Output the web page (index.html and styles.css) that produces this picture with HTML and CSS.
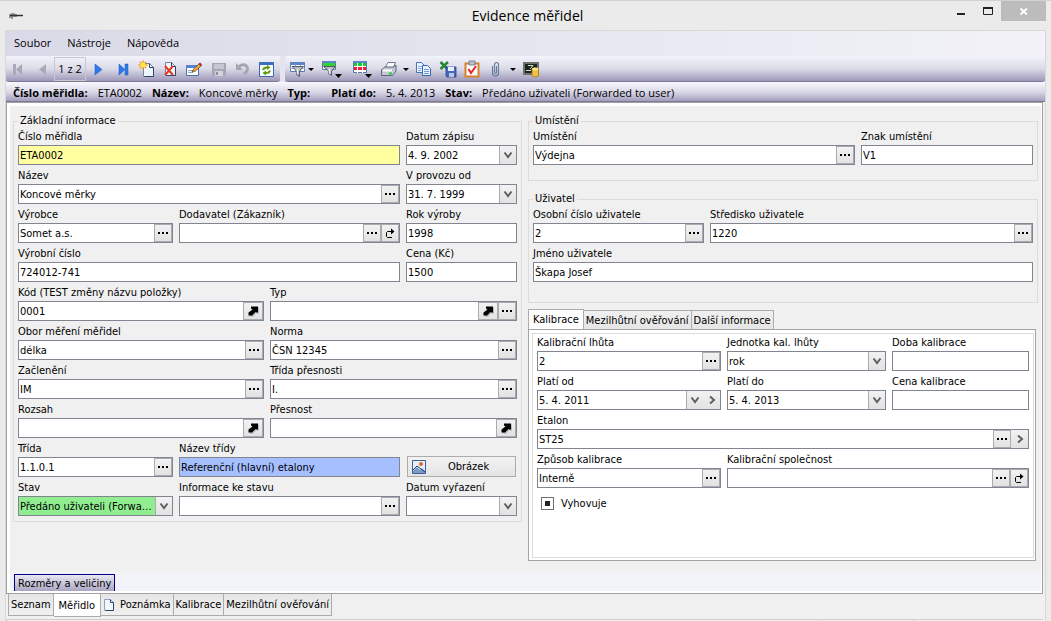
FILE: index.html
```html
<!DOCTYPE html>
<html lang="cs">
<head>
<meta charset="utf-8">
<title>Evidence měřidel</title>
<link rel="stylesheet" href="styles.css">
</head>
<body>
<svg class="sprite" aria-hidden="true">
  <symbol id="dots" viewBox="0 0 12 12"><path d="M1 5h2v2H1zM5 5h2v2H5zM9 5h2v2H9z" fill="#000"/></symbol>
  <symbol id="down" viewBox="0 0 12 12"><path d="M2.500 3.500 6 8l3.500-4.500" fill="none" stroke="#606060" stroke-width="2"/></symbol>
  <symbol id="right" viewBox="0 0 12 12"><path d="M4 2.500 8 6 4 9.500" fill="none" stroke="#606060" stroke-width="2"/></symbol>
  <symbol id="jump" viewBox="0 0 12 12"><path d="M8 4.500H3.500L2.500 5.500v4l1 1H8" fill="none" stroke="#000"/><path d="M7 1.500 10.500 4.500 7 7.500z" fill="#000"/></symbol>
  <symbol id="diag" viewBox="0 0 12 12"><path d="M4 1.500h7v6L9.500 8 8.500 7 5 11 1.500 10.500V8L5.500 4.500z" fill="#bbb" transform="translate(1 1)"/><path d="M4 1.500h7v6L9.500 7.500 8.500 7 5 10.500H1.500V7.500L5.500 4.500 4 3.500z" fill="#000"/></symbol>
  <symbol id="page" viewBox="0 0 12 14"><path d="M1.500 1.500h6l3 3v8h-9z" fill="#f2f7fd" stroke="#8ba2c0"/><path d="M7.500 1.500v3h3v8h-8" fill="none" stroke="#2d4468"/></symbol>
</svg>

<div class="window">
  <header class="titlebar">
    <svg class="app-icon" width="16" height="10" viewBox="0 0 16 10"><path d="M1 3v4M3 2v6M5 2v4M7 3v3" stroke="#444" fill="none"/><path d="M1 4.500h13" stroke="#333" stroke-width="1.500"/></svg>
    <h1 class="title">Evidence měřidel</h1>
    <div class="window-buttons">
      <button class="win" aria-label="Minimalizovat"><svg width="26" height="20"><path d="M8 12h8v2H8z" fill="#222"/></svg></button>
      <button class="win" aria-label="Maximalizovat"><svg width="26" height="20"><path d="M8 7h10" stroke="#222" stroke-width="2"/><path d="M8.500 6.500h9v7h-9z" fill="none" stroke="#222"/></svg></button>
      <button class="win close" aria-label="Zavřít"><svg width="45" height="20"><path d="M19.500 7.500 26 13.500M26 7.500l-6.500 6" stroke="#fff" stroke-width="1.800"/></svg></button>
    </div>
  </header>

  <div class="frame">
    <nav class="menubar">
      <button class="menu">Soubor</button><button class="menu">Nástroje</button><button class="menu">Nápověda</button>
    </nav>

    <div class="toolbars">
      <div class="toolbar">
        <button class="tool" aria-label="První"><svg width="24" height="24"><path d="M7 7h3v11H7zM16 7v11l-6-5.500z" fill="#aaa9b8"/></svg></button>
        <button class="tool" aria-label="Předchozí"><svg width="24" height="24"><path d="M16 7v11l-7-5.500z" fill="#aaa9b8"/></svg></button>
        <span class="position">1 z 2</span>
        <button class="tool" aria-label="Další"><svg width="24" height="24"><path d="M9 7v11l7-5.500z" fill="#2f78e8" stroke="#1c55c0" stroke-width=".5"/></svg></button>
        <button class="tool" aria-label="Poslední"><svg width="24" height="24"><path d="M9 7v11l6-5.500zM15 7h3v11h-3z" fill="#2f78e8" stroke="#1c55c0" stroke-width=".5"/></svg></button>
        <button class="tool" aria-label="Nový"><svg width="24" height="24"><path d="M9.500 6.500h6l4 4v9h-10z" fill="#f0f5fc" stroke="#6d86ab"/><path d="M15.500 6.500v4h4v9h-9" fill="none" stroke="#2d4468"/><path d="M9 3.500v9M4.500 8h9M6 5l6 6M12 5l-6 6" stroke="#f29a1b" stroke-width="1.500"/><circle cx="9" cy="8" r="2.500" fill="#ffe94a"/></svg></button>
        <button class="tool" aria-label="Smazat"><svg width="24" height="24"><path d="M7.500 5.500h6l4 4v9h-10z" fill="#eef3fa" stroke="#6d86ab"/><path d="M13.500 5.500v4h4v9h-9" fill="none" stroke="#2d4468"/><path d="m7 9 8 9M15 9l-8 9" stroke="#e8371f" stroke-width="2"/></svg></button>
        <button class="tool" aria-label="Upravit"><svg width="24" height="24"><path d="M4.500 8.500h12v10h-12z" fill="#fff" stroke="#4e6fae"/><path d="M4 8h13v3H4z" fill="#5583d4"/><path d="M6 13.500h6M6 15.500h5" stroke="#8fa6c8"/><path d="m10 15 1.500-3 6-5.500 2 2-6 5.500z" fill="#eaa94c" stroke="#6b4520" stroke-width=".8"/><path d="m16.500 7 1.500-1.500 2 2L18.500 9z" fill="#98302c"/></svg></button>
        <button class="tool" aria-label="Uložit"><svg width="24" height="24"><path d="M6 6h14v13H7l-1-1z" fill="#a6a7b0"/><path d="M8 7h10v5H8z" fill="#c5c6d1"/><path d="M9 14h8v5H9z" fill="#d2d2dc"/><path d="M10 15h2v3h-2z" fill="#8d8e99"/></svg></button>
        <button class="tool" aria-label="Zpět"><svg width="24" height="24"><path d="M9 9.500q4-3 7-1 4 4-2 8.500" fill="none" stroke="#a5a6b1" stroke-width="3"/><path d="M6 6v7h7z" fill="#a5a6b1"/></svg></button>
        <button class="tool" aria-label="Obnovit"><svg width="24" height="24"><path d="M5.500 5.500h14v14h-14z" fill="#f8fbff" stroke="#3c65a8"/><path d="M5 5h15v3H5z" fill="#3e6dc2"/><path d="M9 13q1-3 5-2.500M16 13.500q-1 3-5 2.500" fill="none" stroke="#5a9b12" stroke-width="2"/><path d="M13 8v5l3.500-2.500zM12 13.500v5l-3.500-2.500z" fill="#5a9b12"/></svg></button>
      </div>
      <div class="toolbar wide">
        <button class="tool" aria-label="Filtr"><svg width="32" height="24"><path d="M4.500 5.500h14v9h-14z" fill="#fff" stroke="#5a78ad"/><path d="M4 5h15v3H4z" fill="#5c86ca"/><path d="M4 11.500h15M9.500 8v6M14.500 8v6" stroke="#9cb0d0"/><path d="M6 9.500h11.500L13.500 14v5.500l-3-2V14z" fill="#b8bcc2" stroke="#555d68"/><path d="M11.500 12v5" stroke="#f6f7f8" stroke-width="1.500"/><path d="M22 11h6l-3 3z" fill="#000"/></svg></button>
        <button class="tool" aria-label="Barevný filtr"><svg width="30" height="24"><path d="M4.500 4.500h13v8h-13z" fill="#fff" stroke="#5a78ad"/><path d="M4 4h14v2H4z" fill="#5c86ca"/><path d="M5 6h12v3H5z" fill="#2dd52d"/><path d="M5.500 9.500h12L13.500 14v4.500l-3-2V14z" fill="#b8bcc2" stroke="#555d68"/><path d="M11.500 11.500v5" stroke="#f6f7f8" stroke-width="1.500"/><path d="M17 17h7l-3.500 4z" fill="#000"/></svg></button>
        <button class="tool" aria-label="Tabulka"><svg width="30" height="24"><path d="M5.500 4.500h13v11h-13z" fill="#fff" stroke="#5a78ad"/><path d="M5 4h14v2H5z" fill="#5c86ca"/><path d="M6 6h12v3H6z" fill="#18cc32"/><path d="M6 10h12v3H6z" fill="#ea2238"/><path d="M9.500 6v10M14.500 6v10" stroke="#fff"/><path d="M17 17h7l-3.500 4z" fill="#000"/></svg></button>
        <button class="tool" aria-label="Tisk"><svg width="34" height="24"><path d="m7 11 3-5.500h7.500L15 11z" fill="#fff" stroke="#6d7c91"/><path d="m3.500 13 3-3h9l2.500-2v6l-3.500 4.500h-11z" fill="#c1c8d2" stroke="#59677a"/><path d="M5 13.500h9" stroke="#fff" stroke-width="2"/><path d="M11 16.500h3" stroke="#1fd02e" stroke-width="2"/><path d="M25 11h6l-3 3z" fill="#000"/></svg></button>
        <button class="tool" aria-label="Kopírovat"><svg width="24" height="24"><path d="M4.500 5.500h5l3 3v7h-8z" fill="#edf4fd" stroke="#4474bd"/><path d="M6 9.500h5M6 11.500h5M6 13.500h3" stroke="#8aade0"/><path d="M10.500 8.500h5l3 3v7h-8z" fill="#edf4fd" stroke="#3468b8"/><path d="M12 12.500h5M12 14.500h5M12 16.500h5" stroke="#7299d8"/></svg></button>
        <button class="tool" aria-label="Export do Excelu"><svg width="24" height="24"><path d="m4.500 5 7 7M12 5l-7.500 7" stroke="#278737" stroke-width="2.500"/><path d="M10 10h10v10H11l-1-1z" fill="#4668bd" stroke="#283c83" stroke-width=".8"/><path d="M12 10h6v4h-6z" fill="#e8effb"/><path d="M13 16h5v4h-5z" fill="#b7c5e8"/></svg></button>
        <button class="tool" aria-label="Kontrola"><svg width="24" height="24"><path d="M5.500 6.500h13v13h-13z" fill="#fff" stroke="#d9822a" stroke-width="2"/><path d="M9 4h6v4H9z" fill="#b7c1d0" stroke="#647287" stroke-width=".8"/><path d="m8.500 12 2.500 4 5-7" fill="none" stroke="#e02525" stroke-width="2"/></svg></button>
        <button class="tool" aria-label="Přílohy"><svg width="36" height="24"><path d="M8.500 9v7q0 3 3 3t3-3V8q0-2.500-2-2.500T10.500 8v7q0 1.500 1 1.500t1-1.500V9" fill="none" stroke="#667d9e" stroke-width="1.200"/><path d="M26 11h6l-3 3z" fill="#000"/></svg></button>
        <button class="tool" aria-label="Databáze"><svg width="24" height="24"><path d="M3 5h16v13H3z" fill="#6d716a"/><path d="M5 7h12v9H5z" fill="#1c241e"/><path d="M6 13.500h5M8 8.500h5l-3 3.500" stroke="#d5ddd0" fill="none"/><path d="M12 12q3-2 6.500 0v7q-3 2-6.500 0z" fill="#f0bf45" stroke="#a6781b" stroke-width=".8"/><ellipse cx="15.200" cy="12" rx="3.200" ry="1.400" fill="#ffe48a"/></svg></button>
      </div>
    </div>

    <div class="infobar">
      <b>Číslo měřidla:</b><span>ETA0002</span>
      <b>Název:</b><span>Koncové měrky</span>
      <b>Typ:</b><span class="blank"></span>
      <b>Platí do:</b><span>5. 4. 2013</span>
      <b>Stav:</b><span>Předáno uživateli (Forwarded to user)</span>
    </div>

    <main class="sheet">
      <form class="form">
        <div class="column left">
          <fieldset class="group">
            <legend>Základní informace</legend>
            <div class="rows">
              <div class="row main-side">
                <div class="field"><label for="cislo">Číslo měřidla</label><div class="box yellow"><input id="cislo" value="ETA0002"></div></div>
                <div class="field"><label for="zapis">Datum zápisu</label><div class="box"><input id="zapis" value="4. 9. 2002"><button type="button" class="drop" aria-label="Kalendář"><svg><use href="#down"/></svg></button></div></div>
              </div>
              <div class="row main-side">
                <div class="field"><label for="nazev">Název</label><div class="box"><input id="nazev" value="Koncové měrky"><button type="button" class="pick" aria-label="Vybrat"><svg><use href="#dots"/></svg></button></div></div>
                <div class="field"><label for="provoz">V provozu od</label><div class="box"><input id="provoz" value="31. 7. 1999"><button type="button" class="drop" aria-label="Kalendář"><svg><use href="#down"/></svg></button></div></div>
              </div>
              <div class="row thirds">
                <div class="field"><label for="vyrobce">Výrobce</label><div class="box"><input id="vyrobce" value="Somet a.s."><button type="button" class="pick" aria-label="Vybrat"><svg><use href="#dots"/></svg></button></div></div>
                <div class="field"><label for="dodavatel">Dodavatel (Zákazník)</label><div class="box"><input id="dodavatel"><button type="button" class="pick" aria-label="Vybrat"><svg><use href="#dots"/></svg></button><button type="button" class="pick" aria-label="Přejít"><svg><use href="#jump"/></svg></button></div></div>
                <div class="field"><label for="rok">Rok výroby</label><div class="box"><input id="rok" value="1998"></div></div>
              </div>
              <div class="row main-side">
                <div class="field"><label for="vyrobni">Výrobní číslo</label><div class="box"><input id="vyrobni" value="724012-741"></div></div>
                <div class="field"><label for="cena">Cena (Kč)</label><div class="box"><input id="cena" value="1500"></div></div>
              </div>
              <div class="row halves">
                <div class="field"><label for="kod">Kód (TEST změny názvu položky)</label><div class="box"><input id="kod" value="0001"><button type="button" class="pick big" aria-label="Otevřít"><svg><use href="#diag"/></svg></button></div></div>
                <div class="field"><label for="typ">Typ</label><div class="box"><input id="typ"><button type="button" class="pick big" aria-label="Otevřít"><svg><use href="#diag"/></svg></button><button type="button" class="pick" aria-label="Vybrat"><svg><use href="#dots"/></svg></button></div></div>
              </div>
              <div class="row halves">
                <div class="field"><label for="obor">Obor měření měřidel</label><div class="box"><input id="obor" value="délka"><button type="button" class="pick" aria-label="Vybrat"><svg><use href="#dots"/></svg></button></div></div>
                <div class="field"><label for="norma">Norma</label><div class="box"><input id="norma" value="ČSN 12345"><button type="button" class="pick" aria-label="Vybrat"><svg><use href="#dots"/></svg></button></div></div>
              </div>
              <div class="row halves">
                <div class="field"><label for="zacleneni">Začlenění</label><div class="box"><input id="zacleneni" value="IM"><button type="button" class="pick" aria-label="Vybrat"><svg><use href="#dots"/></svg></button></div></div>
                <div class="field"><label for="tridap">Třída přesnosti</label><div class="box"><input id="tridap" value="I."><button type="button" class="pick" aria-label="Vybrat"><svg><use href="#dots"/></svg></button></div></div>
              </div>
              <div class="row halves">
                <div class="field"><label for="rozsah">Rozsah</label><div class="box"><input id="rozsah"><button type="button" class="pick big" aria-label="Otevřít"><svg><use href="#diag"/></svg></button></div></div>
                <div class="field"><label for="presnost">Přesnost</label><div class="box"><input id="presnost"><button type="button" class="pick big" aria-label="Otevřít"><svg><use href="#diag"/></svg></button></div></div>
              </div>
              <div class="row thirds">
                <div class="field"><label for="trida">Třída</label><div class="box"><input id="trida" value="1.1.0.1"><button type="button" class="pick" aria-label="Vybrat"><svg><use href="#dots"/></svg></button></div></div>
                <div class="field"><label for="nazevt">Název třídy</label><div class="box blue"><input id="nazevt" value="Referenční (hlavní) etalony"></div></div>
                <button type="button" class="picture"><svg width="14" height="14" viewBox="0 0 14 14"><path d="M.500.500h13v13H.500z" fill="#e6f0fb" stroke="#3c5f96"/><circle cx="9" cy="4" r="2" fill="#e8642c"/><path d="m1 11 4-4 3 3 2-2 3 3v2H1z" fill="#7d9cc5"/><path d="m1 10 4-4 8 6" fill="none" stroke="#26426f"/></svg><span>Obrázek</span></button>
              </div>
              <div class="row thirds">
                <div class="field"><label for="stav">Stav</label><div class="box green"><select id="stav"><option>Předáno uživateli (Forwarded to user)</option></select><span class="drop"><svg><use href="#down"/></svg></span></div></div>
                <div class="field"><label for="info">Informace ke stavu</label><div class="box"><input id="info"><button type="button" class="pick" aria-label="Vybrat"><svg><use href="#dots"/></svg></button></div></div>
                <div class="field"><label for="vyrazeni">Datum vyřazení</label><div class="box"><input id="vyrazeni"><button type="button" class="drop" aria-label="Kalendář"><svg><use href="#down"/></svg></button></div></div>
              </div>
            </div>
          </fieldset>
        </div>

        <div class="column right">
          <fieldset class="group place">
            <legend>Umístění</legend>
            <div class="rows">
              <div class="row location">
                <div class="field"><label for="umisteni">Umístění</label><div class="box"><input id="umisteni" value="Výdejna"><button type="button" class="pick" aria-label="Vybrat"><svg><use href="#dots"/></svg></button></div></div>
                <div class="field"><label for="znak">Znak umístění</label><div class="box"><input id="znak" value="V1"></div></div>
              </div>
            </div>
          </fieldset>
          <fieldset class="group user">
            <legend>Uživatel</legend>
            <div class="rows">
              <div class="row person">
                <div class="field"><label for="osobni">Osobní číslo uživatele</label><div class="box"><input id="osobni" value="2"><button type="button" class="pick" aria-label="Vybrat"><svg><use href="#dots"/></svg></button></div></div>
                <div class="field"><label for="stredisko">Středisko uživatele</label><div class="box"><input id="stredisko" value="1220"><button type="button" class="pick" aria-label="Vybrat"><svg><use href="#dots"/></svg></button></div></div>
              </div>
              <div class="row">
                <div class="field"><label for="jmeno">Jméno uživatele</label><div class="box"><input id="jmeno" value="Škapa Josef"></div></div>
              </div>
            </div>
          </fieldset>

          <div class="tabs">
            <button type="button" class="tab active">Kalibrace</button><button type="button" class="tab">Mezilhůtní ověřování</button><button type="button" class="tab">Další informace</button>
          </div>
          <div class="tabpanel">
            <div class="tabbody rows">
              <div class="row calib">
                <div class="field"><label for="lhuta">Kalibrační lhůta</label><div class="box"><input id="lhuta" value="2"><button type="button" class="pick" aria-label="Vybrat"><svg><use href="#dots"/></svg></button></div></div>
                <div class="field"><label for="jednotka">Jednotka kal. lhůty</label><div class="box"><select id="jednotka"><option>rok</option></select><span class="drop"><svg><use href="#down"/></svg></span></div></div>
                <div class="field"><label for="doba">Doba kalibrace</label><div class="box"><input id="doba"></div></div>
              </div>
              <div class="row calib">
                <div class="field"><label for="od">Platí od</label><div class="box"><input id="od" value="5. 4. 2011"><button type="button" class="drop" aria-label="Kalendář"><svg><use href="#down"/></svg></button><button type="button" class="drop flat" aria-label="Další"><svg><use href="#right"/></svg></button></div></div>
                <div class="field"><label for="do">Platí do</label><div class="box"><input id="do" value="5. 4. 2013"><button type="button" class="drop" aria-label="Kalendář"><svg><use href="#down"/></svg></button></div></div>
                <div class="field"><label for="cenak">Cena kalibrace</label><div class="box"><input id="cenak"></div></div>
              </div>
              <div class="row">
                <div class="field"><label for="etalon">Etalon</label><div class="box"><input id="etalon" value="ST25"><button type="button" class="pick" aria-label="Vybrat"><svg><use href="#dots"/></svg></button><button type="button" class="drop flat" aria-label="Další"><svg><use href="#right"/></svg></button></div></div>
              </div>
              <div class="row company">
                <div class="field"><label for="zpusob">Způsob kalibrace</label><div class="box"><input id="zpusob" value="Interně"><button type="button" class="pick" aria-label="Vybrat"><svg><use href="#dots"/></svg></button></div></div>
                <div class="field"><label for="spol">Kalibrační společnost</label><div class="box"><input id="spol"><button type="button" class="pick" aria-label="Vybrat"><svg><use href="#dots"/></svg></button><button type="button" class="pick" aria-label="Přejít"><svg><use href="#jump"/></svg></button></div></div>
              </div>
              <label class="check"><input type="checkbox" checked>Vyhovuje</label>
            </div>
          </div>
        </div>
      </form>
      <div class="dock"><button type="button" class="dock-button">Rozměry a veličiny</button></div>
    </main>

    <nav class="page-tabs">
      <button class="ptab">Seznam</button><button class="ptab active">Měřidlo</button><button class="ptab"><svg width="12" height="14"><use href="#page"/></svg>Poznámka</button><button class="ptab">Kalibrace</button><button class="ptab">Mezilhůtní ověřování</button>
    </nav>
    <footer class="status"><span></span><span></span><span></span></footer>
  </div>
</div>
</body>
</html>
```
FILE: styles.css
```css
* { box-sizing: border-box; }

body {
  margin: 0;
  color: #000;
  background: #ebebeb;
  font-family: "DejaVu Sans Condensed", "DejaVu Sans", sans-serif;
  font-size: 11px;
}

button, input, select {
  font: inherit;
  color: inherit;
  margin: 0;
  padding: 0;
  border: 0;
  border-radius: 0;
  background: none;
}

.sprite { position: absolute; width: 0; height: 0; }

.window {
  min-height: 100vh;
  display: flex;
  flex-direction: column;
  border-top: 1px solid #d2d2d2;
}

/* Title bar */
.titlebar {
  height: 29px;
  display: grid;
  grid-template-columns: 1fr auto 1fr;
  align-items: center;
  padding: 0 5px 0 9px;
}
.title, .menubar, .position, .infobar { font-family: "Open Sans", "Noto Sans", sans-serif; }
.title {
  margin: 0;
  font-size: 14px;
  font-weight: 400;
  line-height: 20px;
}
.window-buttons { display: flex; justify-content: flex-end; align-self: start; }
.win { height: 20px; }
.win svg { display: block; }
.close { background: #bcbcbc; }

.frame {
  flex: 1;
  display: flex;
  flex-direction: column;
  margin: 0 5px;
  border: 1px solid #d8d8d8;
  border-bottom: 0;
  background: #f0f0f0;
}

/* Menu and toolbars */
.menubar {
  display: flex;
  gap: 16px;
  height: 25px;
  padding: 0 8px 2px;
  background: linear-gradient(90deg, #d9d9e7, #f2f2f8);
}

.toolbars {
  display: flex;
  gap: 5px;
  height: 26px;
  background: #e4e4ee;
}
.toolbar {
  display: flex;
  align-items: center;
  padding-right: 2px;
  border-bottom: 1px solid #7d7898;
  border-radius: 3px 0 3px 3px;
  background: linear-gradient(#f3f3fb, #dcdce9 50%, #9d98b9);
}
.toolbar.wide { flex: 1; padding-left: 1px; }
.tool svg { display: block; }
.position {
  width: 32px;
  height: 24px;
  line-height: 22px;
  text-align: center;
  border: 1px solid #c8c8cc;
}

.infobar {
  display: flex;
  align-items: center;
  gap: 10px;
  height: 20px;
  padding: 0 7px;
  white-space: nowrap;
  border-top: 1px solid #f8f8fc;
  border-bottom: 1px solid #7d7898;
  background: linear-gradient(#f5f5fc, #d9d8e7 50%, #a29dbc);
}
.blank { width: 1px; }

/* Sheet */
.sheet {
  flex: 1;
  display: flex;
  flex-direction: column;
  margin-right: 2px;
  padding: 3px 1px 2px 3px;
  border: 1px solid #a0a0a0;
  background: #fff;
}
.form {
  flex: 1;
  display: flex;
  gap: 6px;
  padding: 8px 3px 11px;
  background: #f0f0f0;
}
.column { min-width: 0; display: flex; flex-direction: column; }
.left { flex: 509 0 0; }
.right { flex: 510 0 0; }

.group {
  min-width: 0;
  margin: 0;
  padding: 0 4px 5px;
  border: 1px solid #dcdcdc;
}
.group legend { margin-left: 0; padding: 0 2px; line-height: 14px; }
.place { padding-bottom: 15px; }
.user { margin-top: 11px; padding-bottom: 20px; }

.rows { display: flex; flex-direction: column; gap: 2px; }
.row { display: grid; gap: 6px; }
.main-side { grid-template-columns: 382fr 111fr; }
.thirds { grid-template-columns: 155fr 221fr 111fr; }
.halves { grid-template-columns: 246fr 247fr; }
.location { grid-template-columns: 322fr 172fr; }
.person { grid-template-columns: 171fr 323fr; }
.calib { grid-template-columns: 184fr 159fr 137fr; }
.company { grid-template-columns: 184fr 302fr; }

.field { min-width: 0; }
.field label { display: block; height: 17px; line-height: 17px; white-space: nowrap; }
.box {
  display: flex;
  height: 20px;
  border: 1px solid #81858f;
  background: #fff;
}
.box input, .box select {
  flex: 1;
  width: 0;
  min-width: 0;
  padding: 0 1px;
  outline: 0;
  appearance: none;
  text-overflow: ellipsis;
  white-space: nowrap;
  overflow: hidden;
}
.yellow { background: #ffffa0; }
.blue { background: #a6bfff; }
.green { background: #90ee90; }

.pick, .drop {
  display: flex;
  flex: none;
  align-items: center;
  justify-content: center;
  width: 18px;
  background: linear-gradient(#f2f2f2, #e2e2e2);
}
.pick { border: 1px solid #a8abb0; }
.big { width: 20px; }
.drop { width: 17px; border-left: 1px solid #a8abb0; }
.flat { border-left: 0; }
.pick svg, .drop svg { width: 12px; height: 12px; }

.picture {
  display: flex;
  align-items: center;
  align-self: end;
  height: 21px;
  margin: 0 1px;
  padding: 0 4px;
  border: 1px solid #acacac;
  background: linear-gradient(#f2f2f2, #e4e4e4);
}
.picture span { flex: 1; }

/* Calibration tabs */
.tabs { display: flex; align-items: flex-end; height: 20px; margin-top: 6px; }
.tab {
  height: 19px;
  padding: 0 2px;
  white-space: nowrap;
  border: 1px solid #acacac;
  border-left: 0;
  border-bottom: 0;
  background: linear-gradient(#f0f0f0, #e5e5e5);
}
.tab.active { height: 20px; padding: 0 4px; border-left: 1px solid #acacac; background: #fff; }
.tabpanel {
  flex: 1;
  display: flex;
  margin-right: 2px;
  padding: 3px 1px 2px 3px;
  border: 1px solid #a4a4a4;
  background: #fff;
}
.tabbody { flex: 1; min-width: 0; padding: 0 4px; border: 1px solid #dcdcdc; }

.check { display: flex; align-items: center; gap: 7px; margin: 7px 4px 0; }
.check input {
  appearance: none;
  width: 13px;
  height: 13px;
  border: 1px solid #707070;
  background: linear-gradient(#222, #222) center / 5px 5px no-repeat #fff;
}

.dock { height: 19px; padding: 2px 4px 0; background: #f2f2f9; }
.dock-button {
  display: block;
  height: 17px;
  padding: 0 3px;
  border: 1px solid #000080;
  border-bottom: 0;
  background: linear-gradient(#e8e8f2, #aaa6c2);
}

/* Page tabs */
.page-tabs { display: flex; align-items: flex-start; height: 25px; padding-left: 2px; }
.ptab {
  display: flex;
  align-items: center;
  gap: 5px;
  height: 22px;
  padding: 0 2px;
  white-space: nowrap;
  border: 1px solid #acacac;
  border-width: 0 1px 1px 0;
  background: linear-gradient(#e6e6e6, #f0f0f0);
}
.ptab:first-child { border-left-width: 1px; }
.ptab.active { height: 23px; padding: 0 5px; background: #fff; }

.status {
  display: grid;
  grid-template-columns: 810fr 95fr 130fr;
  height: 2px;
  margin-right: 2px;
  border-top: 1px solid #d0d0d0;
}
.status span { border-left: 1px solid #d0d0d0; }
```
